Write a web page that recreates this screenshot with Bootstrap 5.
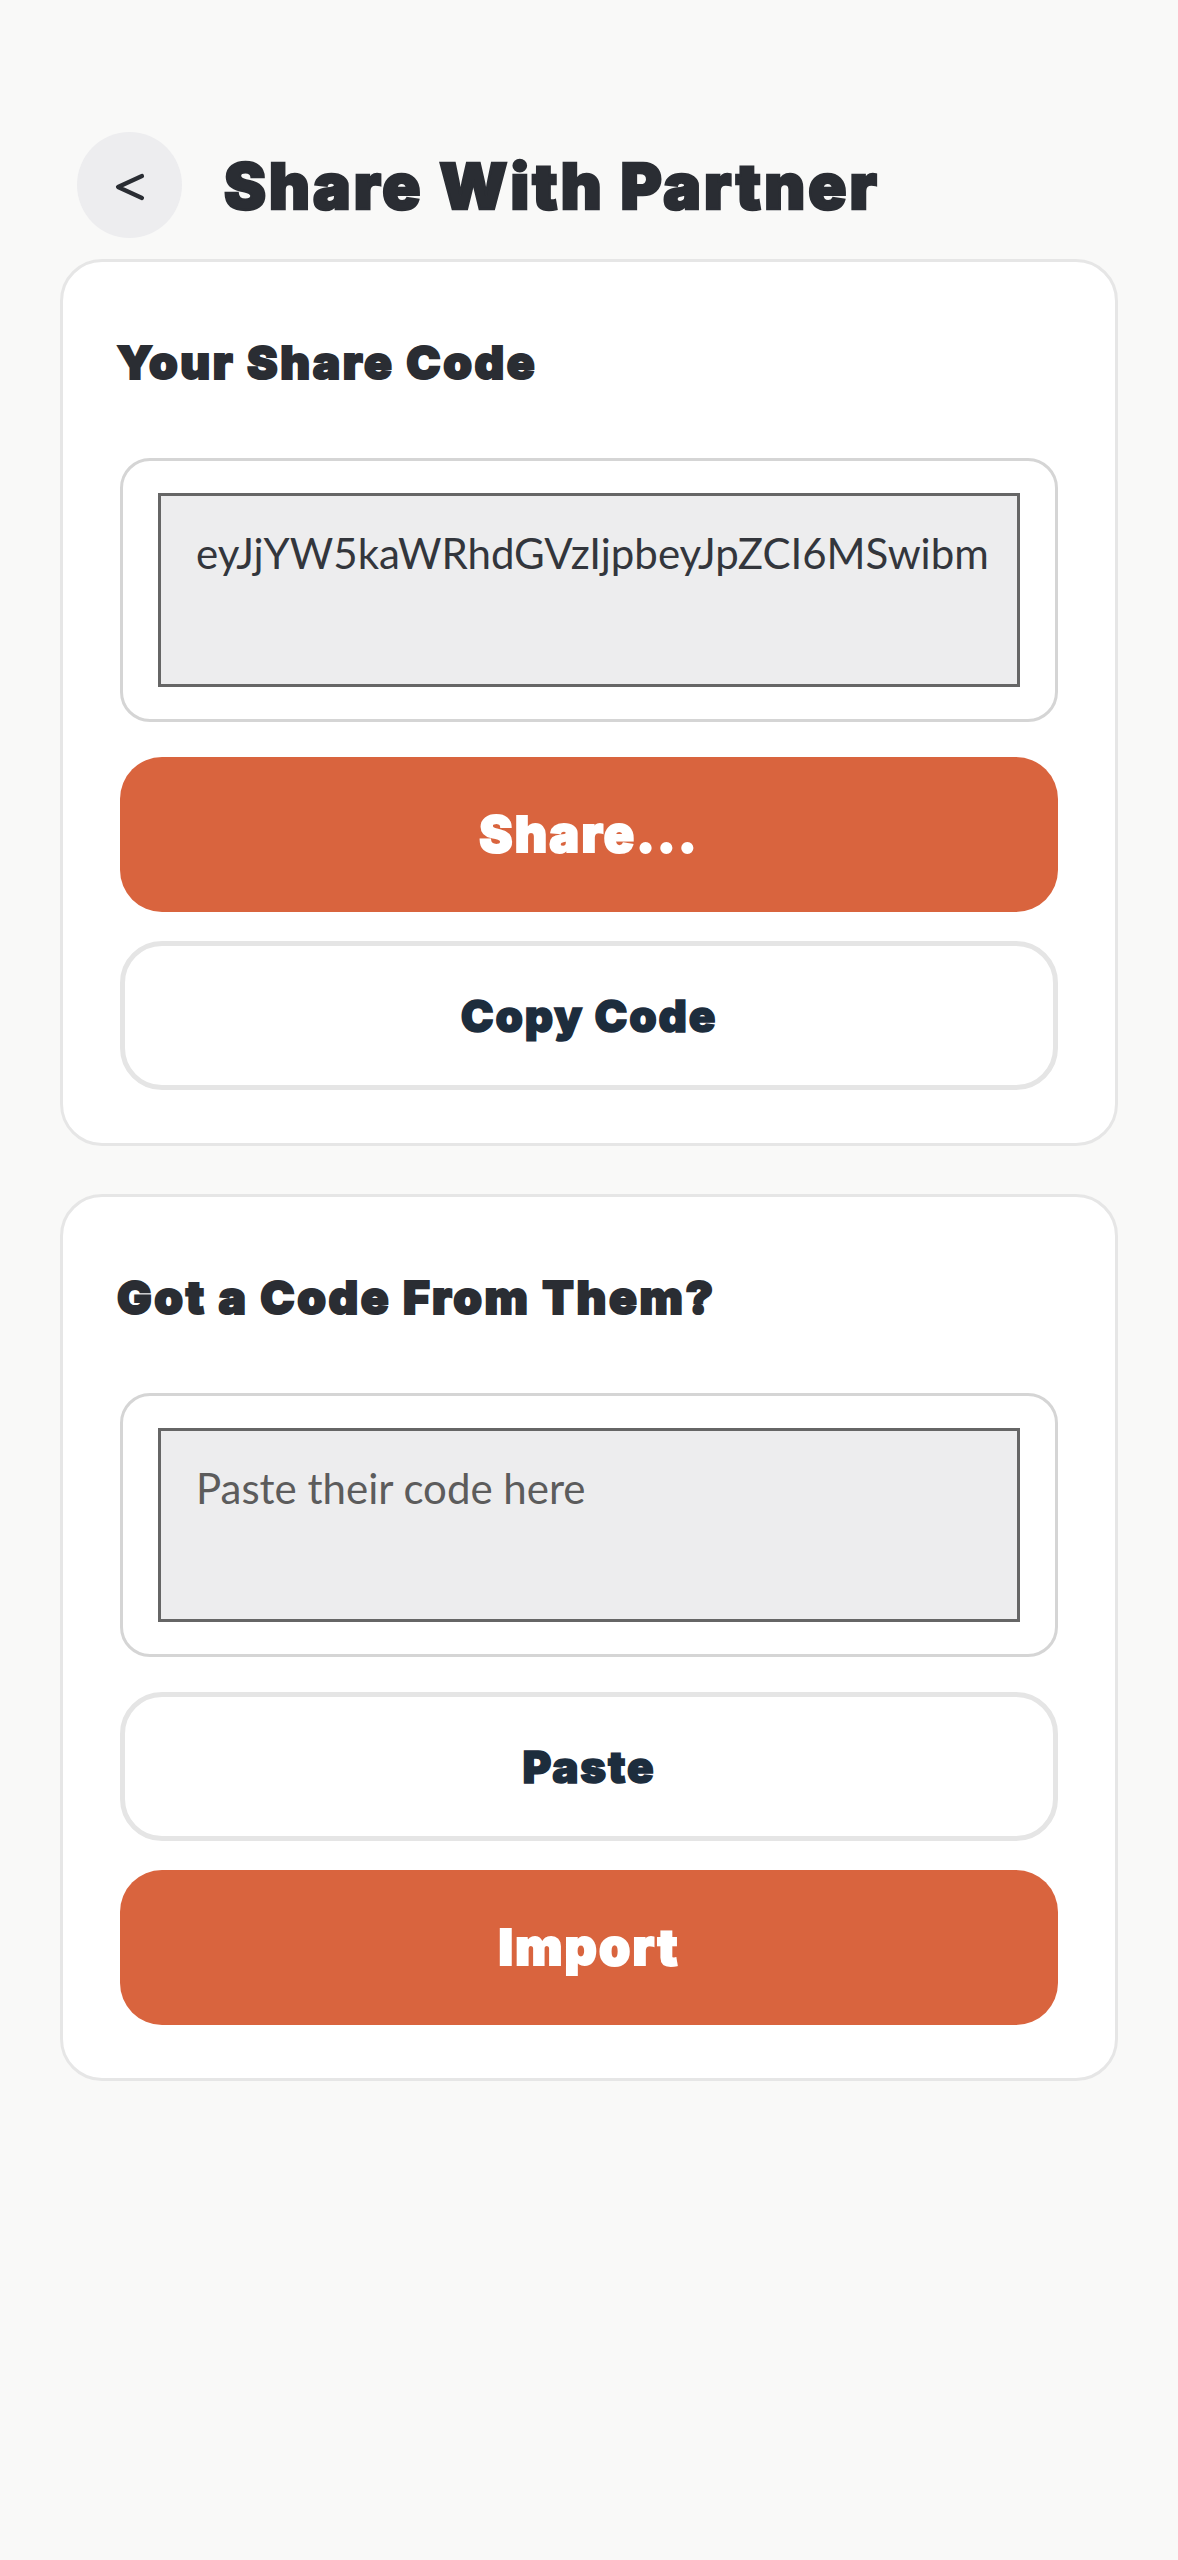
<!doctype html>
<html lang="en">
<head>
<meta charset="utf-8">
<title>Share With Partner</title>
<link rel="stylesheet" href="https://cdn.jsdelivr.net/npm/bootstrap@5.3.0/dist/css/bootstrap.min.css">
<style>
html,body{background:#f9f9f8;}
body{font-family:"Inter","Liberation Sans",sans-serif;color:#2a2d33;}
.screen{padding:132px 60px 0;}
.head-row{gap:42px;padding-left:17px;margin-bottom:21px;height:106px;}
.back-btn{width:105px;height:106px;border-radius:50%;background:#ededef;border:0;padding:0;color:#2a2d33;}
.screen-title{font-family:"Inter",sans-serif;font-weight:900;font-size:63px;line-height:1;margin:3px 0 0;letter-spacing:3.1px;color:#2a2d33;-webkit-text-stroke:2.5px #2a2d33;white-space:nowrap;}
.panel{border:3px solid #e6e6e6;border-radius:42px;background:#fff;padding:70px 57px 53px;}
.panel + .panel{margin-top:48px;}
.panel-title{font-family:"Inter",sans-serif;font-weight:900;font-size:46px;line-height:60px;margin:0 0 0 -3px;letter-spacing:2.6px;color:#2a2d33;-webkit-text-stroke:2px #2a2d33;}
.code-wrap{border:3px solid #d5d5d5;border-radius:30px;padding:32px 35px;background:#fff;margin-top:66px;}
.code-input{display:block;width:100%;height:194px;background:#ededee;border:3px solid #666;border-radius:0;padding:32px 35px 0;font-family:"Lato",sans-serif;font-size:42px;line-height:50px;color:#33363c;resize:none;overflow:hidden;outline:0;white-space:nowrap;}
.code-input::placeholder{color:#5c5c5c;opacity:1;}
.act{display:block;width:100%;border-radius:42px;font-family:"Inter",sans-serif;font-weight:900;text-align:center;}
.act-fill{height:155px;background:#d9643e;border:0;color:#fff;font-size:50px;letter-spacing:2.2px;-webkit-text-stroke:2px #fff;}
.act-line{height:149px;background:#fff;border:5px solid #e5e5e5;color:#1d2d3d;font-size:44px;letter-spacing:1.8px;-webkit-text-stroke:1.5px #1d2d3d;}
.gap-a{margin-top:35px;}
.gap-b{margin-top:29px;}
</style>
</head>
<body>
<div class="screen">
  <div class="head-row d-flex align-items-center">
    <button class="back-btn d-flex align-items-center justify-content-center flex-shrink-0" type="button" aria-label="Back">
      <svg class="mt-1" width="30" height="28" viewBox="0 0 30 28" fill="none" stroke="#2a2d33" stroke-width="4.2" stroke-linecap="round" stroke-linejoin="round"><path d="M27 3 3 14 27 25"/></svg>
    </button>
    <h1 class="screen-title">Share With Partner</h1>
  </div>
  <div class="panel">
    <h2 class="panel-title">Your Share Code</h2>
    <div class="code-wrap"><textarea class="code-input" readonly>eyJjYW5kaWRhdGVzIjpbeyJpZCI6MSwibm</textarea></div>
    <button class="act act-fill gap-a" type="button">Share...</button>
    <button class="act act-line gap-b" type="button">Copy Code</button>
  </div>
  <div class="panel">
    <h2 class="panel-title">Got a Code From Them?</h2>
    <div class="code-wrap"><textarea class="code-input" placeholder="Paste their code here"></textarea></div>
    <button class="act act-line gap-a" type="button">Paste</button>
    <button class="act act-fill gap-b" type="button">Import</button>
  </div>
</div>
<script src="https://cdn.jsdelivr.net/npm/bootstrap@5.3.0/dist/js/bootstrap.bundle.min.js"></script>
</body>
</html>
